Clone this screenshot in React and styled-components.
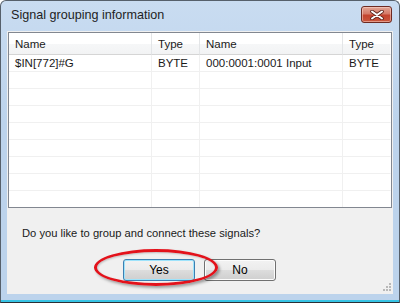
import React from "react";
import styled, { createGlobalStyle } from "styled-components";

const Global = createGlobalStyle`
  body {
    margin: 0;
    background: #ffffff;
  }
`;

const Page = styled.div`
  position: relative;
  width: 404px;
  height: 306px;
`;

const Window = styled.div`
  box-sizing: border-box;
  width: 400px;
  height: 303px;
  border: 1px solid #56606b;
  border-bottom-color: #2a2f35;
  border-radius: 6px 6px 0 0;
  background: linear-gradient(to bottom, #c9dcf1 0%, #bcd3ec 40%, #bcd3ec 100%);
  box-shadow: inset 0 -2px 0 #36c3e4;
  padding: 0 6px 8px 6px;
  display: flex;
  flex-direction: column;
  font-family: "Liberation Sans", Arial, sans-serif;
`;

const TitleBar = styled.div`
  height: 30px;
  display: flex;
  align-items: center;
  justify-content: space-between;
  padding: 0 1px 0 4px;
`;

const Title = styled.div`
  font-size: 12.6px;
  color: #1e1e1e;
  padding-bottom: 3px;
`;

const CloseButton = styled.div`
  box-sizing: border-box;
  width: 31px;
  height: 17px;
  margin-top: -3px;
  border: 1px solid #6d2a22;
  border-radius: 3px;
  background: linear-gradient(to bottom, #e2a595 0%, #d57a68 45%, #c4432e 55%, #c9573e 100%);
  box-shadow: inset 0 0 0 1px rgba(255, 220, 210, 0.5);
  display: flex;
  align-items: center;
  justify-content: center;
`;

const Content = styled.div`
  flex: 1;
  background: #f0f0f0;
  display: flex;
  flex-direction: column;
  padding: 1px 1px 0 1px;
  position: relative;
`;

const List = styled.div`
  box-sizing: border-box;
  height: 176px;
  border: 1px solid #828790;
  background: #ffffff;
  display: grid;
  grid-template-columns: 143px 48px 143px 1fr;
  grid-auto-rows: 17px;
  grid-template-rows: 22px;
  overflow: hidden;
  font-size: 11.5px;
  color: #1a1a1a;
`;

const HeadCell = styled.div`
  display: flex;
  align-items: center;
  padding-left: 6px;
  background: linear-gradient(to bottom, #ffffff 0%, #ffffff 50%, #f6f7f8 51%, #f2f3f4 100%);
  border-right: 1px solid ${(p) => (p.$last ? "#ffffff" : "#e3e5e7")};
  border-bottom: 1px solid #d5d5d5;
`;

const Cell = styled.div`
  display: flex;
  align-items: center;
  padding-left: 6px;
  border-right: 1px solid ${(p) => (p.$last ? "#ffffff" : "#f0f0f0")};
  border-bottom: 1px solid #f0f0f0;
  white-space: nowrap;
`;

const Question = styled.div`
  margin-top: 17px;
  padding-left: 14px;
  font-size: 11.2px;
  color: #1a1a1a;
  height: 16px;
  line-height: 16px;
`;

const ButtonRow = styled.div`
  margin-top: 18px;
  display: flex;
  gap: 9px;
  padding-left: 115px;
`;

const Button = styled.div`
  box-sizing: border-box;
  width: 72px;
  height: 22px;
  border: 1px solid ${(p) => (p.$default ? "#3c7fb1" : "#707070")};
  border-radius: 3px;
  background: linear-gradient(to bottom, #f2f2f2 0%, #ebebeb 49%, #dddddd 50%, #cfcfcf 100%);
  box-shadow: ${(p) =>
    p.$default ? "inset 0 0 0 1px #9ee3fb" : "inset 0 0 0 1px #fcfcfc"};
  display: flex;
  align-items: center;
  justify-content: center;
  font-size: 12px;
  color: #000;
`;

const Highlight = styled.div`
  position: absolute;
  left: 87px;
  top: 218px;
  width: 124px;
  height: 37px;
  box-sizing: border-box;
  border: 3px solid #e3121b;
  border-radius: 50%;
  box-shadow: 2px 2px 3px rgba(0, 0, 0, 0.35), inset 1px 1px 2px rgba(0, 0, 0, 0.2);
  pointer-events: none;
`;

const Grip = styled.svg`
  position: absolute;
  right: 1px;
  bottom: 2px;
`;

const rows = [["$IN[772]#G", "BYTE", "000:0001:0001 Input", "BYTE"]];
const emptyRows = 8;

const App = () => {
  const headers = ["Name", "Type", "Name", "Type"];
  return (
    <Page>
      <Global />
      <Window>
        <TitleBar>
          <Title>Signal grouping information</Title>
          <CloseButton>
            <svg width="16" height="10" viewBox="0 0 16 10">
              <path
                d="M3 1.5 L13 8.5 M13 1.5 L3 8.5"
                stroke="#5a2018"
                strokeWidth="3.6"
                strokeLinecap="round"
              />
              <path
                d="M3 1.5 L13 8.5 M13 1.5 L3 8.5"
                stroke="#ffffff"
                strokeWidth="2"
                strokeLinecap="round"
              />
            </svg>
          </CloseButton>
        </TitleBar>
        <Content>
          <List>
            {headers.map((h, i) => (
              <HeadCell key={"h" + i} $last={i === 3}>
                {h}
              </HeadCell>
            ))}
            {rows.map((r, ri) =>
              r.map((c, ci) => (
                <Cell key={ri + "-" + ci} $last={ci === 3}>
                  {c}
                </Cell>
              ))
            )}
            {Array.from({ length: emptyRows }).map((_, ri) =>
              [0, 1, 2, 3].map((ci) => (
                <Cell key={"e" + ri + "-" + ci} $last={ci === 3} />
              ))
            )}
          </List>
          <Question>Do you like to group and connect these signals?</Question>
          <ButtonRow>
            <Button $default>Yes</Button>
            <Button>No</Button>
          </ButtonRow>
          <Highlight />
          <Grip width="9" height="9" viewBox="0 0 9 9">
            <g fill="#b8b8b8">
              <rect x="6" y="0" width="2" height="2" />
              <rect x="3" y="3" width="2" height="2" />
              <rect x="6" y="3" width="2" height="2" />
              <rect x="0" y="6" width="2" height="2" />
              <rect x="3" y="6" width="2" height="2" />
              <rect x="6" y="6" width="2" height="2" />
            </g>
          </Grip>
        </Content>
      </Window>
    </Page>
  );
};

export default App;
